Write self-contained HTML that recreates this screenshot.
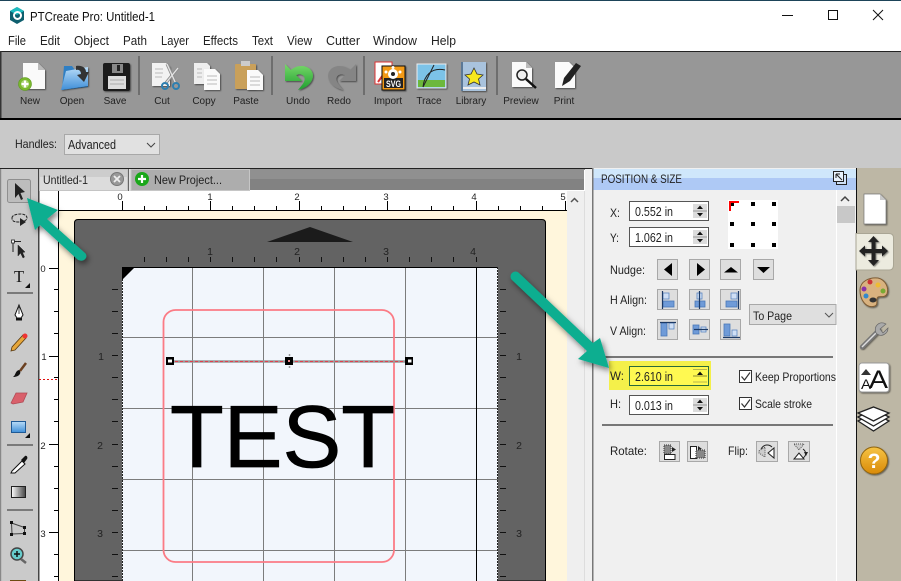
<!DOCTYPE html>
<html><head><meta charset="utf-8"><title>PTCreate Pro</title>
<style>
html,body{margin:0;padding:0;background:#fff;overflow:hidden}
svg{display:block}
text{font-family:"Liberation Sans",sans-serif;fill:#222}
</style></head><body>
<svg width="901" height="581" viewBox="0 0 901 581" xmlns="http://www.w3.org/2000/svg">
<defs>
<linearGradient id="blu" x1="0" y1="0" x2="0" y2="1"><stop offset="0" stop-color="#b9dcf7"/><stop offset="1" stop-color="#3f8fd8"/></linearGradient>
<linearGradient id="grn" x1="0" y1="0" x2="0" y2="1"><stop offset="0" stop-color="#78d86a"/><stop offset="1" stop-color="#1f9f2f"/></linearGradient>
<linearGradient id="gry" x1="0" y1="0" x2="1" y2="0"><stop offset="0" stop-color="#fff"/><stop offset="1" stop-color="#444"/></linearGradient>
<linearGradient id="org" x1="0" y1="0" x2="0" y2="1"><stop offset="0" stop-color="#f6c445"/><stop offset="1" stop-color="#d98a08"/></linearGradient>
<filter id="sh" x="-30%" y="-30%" width="160%" height="160%"><feDropShadow dx="2" dy="3" stdDeviation="3" flood-color="#000" flood-opacity=".5"/></filter>
<filter id="s2" x="-20%" y="-20%" width="140%" height="140%"><feDropShadow dx="1" dy="1" stdDeviation=".7" flood-color="#000" flood-opacity=".5"/></filter>
</defs>

<!-- title bar -->
<rect width="901" height="51" fill="#fff"/>
<rect width="901" height="1" fill="#1d4459"/>
<polygon points="17,7 24,11 24,20 17,24 10,20 10,11" fill="#0e5f6e"/>
<polygon points="17,7 24,11 17,15 10,11" fill="#1dbcc0"/>
<circle cx="17.500" cy="15.500" r="3.500" fill="none" stroke="#fff" stroke-width="2"/>
<text x="30" y="21" font-size="13" textLength="125" lengthAdjust="spacingAndGlyphs" style="fill:#111">PTCreate Pro: Untitled-1</text>
<g font-size="12.500" style="fill:#111">
<text x="8" y="45" textLength="18" lengthAdjust="spacingAndGlyphs">File</text>
<text x="40" y="45" textLength="20" lengthAdjust="spacingAndGlyphs">Edit</text>
<text x="74" y="45" textLength="35" lengthAdjust="spacingAndGlyphs">Object</text>
<text x="123" y="45" textLength="24" lengthAdjust="spacingAndGlyphs">Path</text>
<text x="161" y="45" textLength="28" lengthAdjust="spacingAndGlyphs">Layer</text>
<text x="203" y="45" textLength="35" lengthAdjust="spacingAndGlyphs">Effects</text>
<text x="252" y="45" textLength="21" lengthAdjust="spacingAndGlyphs">Text</text>
<text x="287" y="45" textLength="25" lengthAdjust="spacingAndGlyphs">View</text>
<text x="326" y="45" textLength="34" lengthAdjust="spacingAndGlyphs">Cutter</text>
<text x="373" y="45" textLength="44" lengthAdjust="spacingAndGlyphs">Window</text>
<text x="431" y="45" textLength="25" lengthAdjust="spacingAndGlyphs">Help</text>
</g>
<path d="M782 15.500H793M828.500 10.500H837.500V19.500H828.500ZM873 10L883 20M883 10L873 20" fill="none" stroke="#111" stroke-width="1"/>

<!-- toolbar -->
<rect y="51" width="901" height="68" fill="#979797"/>
<rect y="51" width="901" height="1" fill="#222"/>
<rect x="0" y="51" width="1.500" height="68" fill="#333"/>
<rect y="118" width="901" height="2" fill="#000"/>
<g fill="#6e6e6e"><rect x="138" y="56" width="2" height="39"/><rect x="271" y="56" width="2" height="39"/><rect x="363" y="56" width="2" height="39"/><rect x="496" y="56" width="2" height="39"/></g>

<!-- New -->
<path d="M23 63H38L45 70V89H23Z" fill="#fafafa" filter="url(#s2)"/><path d="M38 63V70H45Z" fill="#bbb"/>
<circle cx="25" cy="84" r="6.500" fill="#7ab82e" stroke="#5d9a1e" stroke-width=".6"/><circle cx="25" cy="84" r="4" fill="#eaf6d6" opacity=".45"/><path d="M25 80.500V87.500M21.500 84H28.500" stroke="#fff" stroke-width="2.200"/>
<!-- Open -->
<path d="M64 66H72L75 70H87L88 87L62 90Z" fill="#2f7fc4"/><path d="M61 90L66 71L88 67V86Z" fill="url(#blu)" filter="url(#s2)"/>
<path d="M76 66C82 65 86 68 86 72L89 72L84 82L77 75L81 74C81 71 79 69 76 70Z" fill="#333"/>
<!-- Save -->
<rect x="103" y="63" width="27" height="28" rx="2" fill="#1b1b1b" filter="url(#s2)"/><rect x="112" y="64" width="11" height="9" fill="#888"/><rect x="117" y="65" width="3" height="6" fill="#222"/><rect x="108" y="76" width="18" height="13" fill="#ddd"/><path d="M110 80H124M110 84H124" stroke="#aaa"/>
<!-- Cut -->
<path d="M152 63H166L170 67V86H152Z" fill="#f2f2f2" filter="url(#s2)"/><path d="M155 69H163M155 73H163M155 77H162" stroke="#bbb"/>
<path d="M167 64L176 84M178 68L165 84" stroke="#8f8f8f" stroke-width="3"/><path d="M167 64L176 84M178 68L165 84" stroke="#e4e4e4" stroke-width="1.300"/><circle cx="165" cy="86" r="3" fill="none" stroke="#2d7fb0" stroke-width="2"/><circle cx="176" cy="86" r="3" fill="none" stroke="#2d7fb0" stroke-width="2"/>
<!-- Copy -->
<path d="M194 63H207L210 66V84H194Z" fill="#eee" filter="url(#s2)"/><path d="M204 69H215L220 74V90H204Z" fill="#fafafa" filter="url(#s2)"/><path d="M207 76H217M207 80H217M207 84H217M197 69H202M197 73H202M197 77H202" stroke="#bbb"/>
<!-- Paste -->
<rect x="235" y="64" width="21" height="25" rx="1" fill="#c9a05a" filter="url(#s2)"/><rect x="241" y="61" width="9" height="5" fill="#ccc"/><path d="M247 70H258L263 75V90H247Z" fill="#fafafa" filter="url(#s2)"/><path d="M250 77H260M250 81H260M250 85H260" stroke="#bbb"/>
<!-- Undo -->
<path d="M285 64L285 81H302L296 75C303 72 308 78 302 85L298 90C311 87 317 76 310 69C304 64 295 66 291 70Z" fill="url(#grn)" filter="url(#s2)"/>
<!-- Redo -->
<path d="M356 64L356 81H339L345 75C338 72 333 78 339 85L343 90C330 87 324 76 331 69C337 64 346 66 350 70Z" fill="#858585" filter="url(#s2)"/>
<!-- Import -->
<path d="M375 62H392V84H375Z" fill="#fff" stroke="#d33" stroke-width="1"/><path d="M378 82L388 68" stroke="#d33" stroke-width="2"/>
<rect x="382" y="66" width="23" height="24" fill="#f39a12" stroke="#111" filter="url(#s2)"/><rect x="384" y="78" width="19" height="10" fill="#222"/>
<circle cx="393" cy="74" r="5" fill="#fff"/><circle cx="386" cy="72" r="1.500" fill="#fff"/><circle cx="400" cy="72" r="1.500" fill="#fff"/><circle cx="393" cy="67.500" r="1.500" fill="#fff"/><circle cx="393" cy="74" r="2" fill="#222"/>
<text x="386" y="87" font-size="9" font-weight="bold" textLength="15" lengthAdjust="spacingAndGlyphs" style="fill:#fff">SVG</text>
<!-- Trace -->
<rect x="417" y="64" width="29" height="24" fill="#7cc3e8" stroke="#eee" filter="url(#s2)"/><rect x="418" y="80" width="27" height="7" fill="#6cb83c"/><path d="M423 87C424 76 431 67 445 70M434 65L423 87" fill="none" stroke="#222" stroke-width="1"/>
<!-- Library -->
<rect x="461" y="62" width="25" height="29" fill="#a9c3dd" filter="url(#s2)"/><rect x="461" y="62" width="2" height="29" fill="#5b7896"/><rect x="463" y="87" width="23" height="2" fill="#eee"/>
<polygon points="474,68 477,74 483,75 478.500,79 480,85 474,82 468,85 469.500,79 465,75 471,74" fill="#f7e81e" stroke="#333" stroke-width=".8"/>
<!-- Preview -->
<path d="M512 62H526L532 68V87H512Z" fill="#fafafa" filter="url(#s2)"/><path d="M526 62V68H532Z" fill="#bbb"/><circle cx="522" cy="75" r="5" fill="#eee" stroke="#222" stroke-width="1.500"/><path d="M526 79L536 88" stroke="#111" stroke-width="2.500"/>
<!-- Print -->
<path d="M555 62H569L575 68V88H555Z" fill="#fafafa" filter="url(#s2)"/><path d="M562 86L564 78L576 63L581 66L570 81Z" fill="#222"/>
<g font-size="10" text-anchor="middle" style="fill:#1a1a1a">
<text x="30" y="104">New</text><text x="72" y="104">Open</text><text x="115" y="104">Save</text><text x="162" y="104">Cut</text><text x="204" y="104">Copy</text><text x="246" y="104">Paste</text><text x="298" y="104">Undo</text><text x="339" y="104">Redo</text><text x="388" y="104">Import</text><text x="429" y="104">Trace</text><text x="471" y="104">Library</text><text x="521" y="104">Preview</text><text x="564" y="104">Print</text>
</g>

<!-- options bar -->
<rect y="120" width="901" height="48" fill="#c9c9c9"/>
<text x="15" y="148" font-size="12" textLength="42" lengthAdjust="spacingAndGlyphs">Handles:</text>
<rect x="64.500" y="134.500" width="95" height="20" fill="#e1e1e1" stroke="#a8a8a8"/>
<text x="68" y="149" font-size="12.500" textLength="48" lengthAdjust="spacingAndGlyphs">Advanced</text>
<path d="M147 143L151 147L155 143" fill="none" stroke="#444"/>
<rect y="168" width="901" height="1.500" fill="#222"/>

<!-- left tools -->
<rect y="169" width="38" height="412" fill="#cacaca"/>
<rect x="0" y="169" width="1.200" height="412" fill="#888"/>
<rect x="38" y="169" width="1.500" height="412" fill="#444"/>
<rect x="7.500" y="179.500" width="23" height="23" rx="2" fill="#bdbdbd" stroke="#8f8f8f"/>
<path d="M15 183L15 198L18.500 194L21 200L23 199L20.500 193L25 192Z" fill="#222"/>
<path d="M12 218C12 215 17 214 21 214C25 214 27 216 27 218C27 221 22 222 18 222C14 222 12 221 12 218Z" fill="none" stroke="#222" stroke-width="1" stroke-dasharray="3 1"/><path d="M20 218L20 226L26 222Z" fill="#222"/>
<rect x="11.500" y="240" width="3" height="3" fill="#fff" stroke="#222" stroke-width=".8"/><path d="M14 241.500H21M13 243V252" stroke="#222"/><path d="M18 245V256L20.500 253L23 258L24.500 257L22.500 252.500L25 252Z" fill="#222" stroke="#222" stroke-width=".5"/>
<text x="14" y="282" font-size="16.500" style="font-family:'Liberation Serif',serif;fill:#111">T</text>
<polygon points="25,288 30,283 30,288" fill="#111"/>
<rect x="7" y="292" width="26" height="2" fill="#7a7a7a"/>
<path d="M19 305L23 315L21 318H17L15 315Z" fill="#fff" stroke="#111" stroke-width="1"/><path d="M19 307V314" stroke="#111" stroke-width=".8"/><rect x="16" y="318" width="6" height="2.500" fill="#111"/>
<path d="M12 347L11 351L15 350L26 338L23 335Z" fill="#e6a63a" stroke="#5a3a10" stroke-width=".8"/><circle cx="25" cy="336" r="2.500" fill="#e33"/>
<path d="M26 363L20 371" stroke="#6b4020" stroke-width="2.500"/><path d="M19 370C22 372 20 377 13 377C16 375 15 371 19 370Z" fill="#111"/>
<path d="M11 403L16 393H27L23 402L13 404Z" fill="#d9606b" stroke="#b04a55" stroke-width=".8"/>
<rect x="11.500" y="421.500" width="14" height="11" fill="url(#blu)" stroke="#1f5a96"/>
<polygon points="25,438 30,433 30,438" fill="#111"/>
<rect x="7" y="444" width="26" height="2" fill="#7a7a7a"/>
<path d="M12 471L22 461L25 464L15 473L11 473Z" fill="#fff" stroke="#111"/><path d="M21 460L25 456C27 455 28 458 27 459L24 463Z" fill="#111"/>
<rect x="11.500" y="486.500" width="14" height="11" fill="url(#gry)" stroke="#222"/>
<rect x="7" y="509" width="26" height="2" fill="#7a7a7a"/>
<path d="M11.500 523L24.500 527.500V533.500L12 534Z" fill="none" stroke="#444"/>
<g fill="#111"><rect x="10" y="521" width="3" height="3"/><rect x="23" y="526" width="3" height="3"/><rect x="23" y="532" width="3" height="3"/><rect x="10" y="533" width="3" height="3"/></g>
<circle cx="17" cy="554" r="6" fill="#6cc" stroke="#444" stroke-width="1.500"/><path d="M14 554H20M17 551V557" stroke="#111" stroke-width="1.500"/><path d="M21 559L26 563" stroke="#666" stroke-width="2.500"/>
<rect x="10" y="580" width="16" height="1" fill="#6e4b12"/>

<!-- tabs -->
<rect x="39" y="169" width="545" height="21" fill="#828282"/>
<rect x="39" y="169" width="545" height="10" fill="#909090"/>
<rect x="39.500" y="169.500" width="88" height="21" fill="#dcdcdc" stroke="#c4c4c4"/>
<rect x="40" y="170" width="87" height="7" fill="#cdcdcd"/>
<rect x="128" y="169" width="1" height="22" fill="#666"/>
<rect x="129" y="169" width="2" height="22" fill="#e2e2e2"/>
<rect x="131" y="169.500" width="118.500" height="21" fill="#adadad" stroke="#c6c6c6"/>
<text x="43" y="184" font-size="12" textLength="45" lengthAdjust="spacingAndGlyphs">Untitled-1</text>
<circle cx="117" cy="179" r="6.500" fill="#999" stroke="#777"/><path d="M114 176L120 182M120 176L114 182" stroke="#eee" stroke-width="1.800"/>
<circle cx="142" cy="179" r="7" fill="#1aa71a"/><path d="M142 175V183M138 179H146" stroke="#fff" stroke-width="2.200"/>
<text x="154" y="184" font-size="12" textLength="68" lengthAdjust="spacingAndGlyphs">New Project...</text>

<!-- rulers -->
<rect x="39.500" y="191" width="528" height="390" fill="#fff"/>
<rect x="59" y="211" width="508" height="370" fill="#fff6dc"/>
<rect x="567" y="191" width="17" height="390" fill="#efefef"/>
<rect x="584" y="191" width="1" height="390" fill="#ddd"/>
<rect x="585" y="169" width="7" height="412" fill="#f0f0f0"/>
<rect x="592" y="168" width="1.500" height="413" fill="#777"/>
<path d="M571 202L574.500 198.500L578 202" fill="none" stroke="#555" stroke-width="1.500"/>
<rect x="58" y="191" width="1" height="390" fill="#000"/>
<rect x="58" y="210" width="509" height="1" fill="#000"/>
<path d="M122.500 201V210M210.500 201V210M299.500 201V210M387.500 201V210M476.500 201V210M565.500 201V210M144.500 206V210M166.500 206V210M188.500 206V210M232.500 206V210M254.500 206V210M276.500 206V210M321.500 206V210M343.500 206V210M365.500 206V210M409.500 206V210M431.500 206V210M453.500 206V210M498.500 206V210M520.500 206V210M542.500 206V210" stroke="#000"/>
<path d="M49 268.500H58M49 356.500H58M49 444.500H58M49 532.500H58M54 289.500H58M54 311.500H58M54 333.500H58M54 377.500H58M54 399.500H58M54 421.500H58M54 466.500H58M54 488.500H58M54 510.500H58M54 554.500H58M54 576.500H58" stroke="#000"/>
<path d="M39 379.500H58" stroke="#e01010" stroke-dasharray="2 2"/>
<g font-size="9.500" text-anchor="middle" style="fill:#334">
<text x="120" y="200">0</text><text x="210" y="200">1</text><text x="297" y="200">2</text><text x="386" y="200">3</text><text x="474" y="200">4</text><text x="563" y="200">5</text>
<text x="43" y="272">0</text><text x="44" y="360">1</text><text x="43" y="449">2</text><text x="43" y="537">3</text>
</g>

<!-- mat -->
<path d="M74.500 581V223Q74.500 219.500 78 219.500H542Q545.500 219.500 545.500 223V581Z" fill="#636363" stroke="#000"/>
<polygon points="310,227 267,242 353,242" fill="#1b1b1b"/>
<path d="M144.500 257V262M166.500 257V262M188.500 257V262M210.500 257V262M232.500 257V262M254.500 257V262M276.500 257V262M299.500 257V262M321.500 257V262M343.500 257V262M365.500 257V262M387.500 257V262M409.500 257V262M431.500 257V262M453.500 257V262M476.500 257V262" stroke="#111"/>
<path d="M112 289.500H118M112 311.500H118M112 333.500H118M112 355.500H118M112 377.500H118M112 399.500H118M112 421.500H118M112 444.500H118M112 466.500H118M112 488.500H118M112 510.500H118M112 532.500H118M112 554.500H118M112 576.500H118M500 289.500H506M500 311.500H506M500 333.500H506M500 355.500H506M500 377.500H506M500 399.500H506M500 421.500H506M500 444.500H506M500 466.500H506M500 488.500H506M500 510.500H506M500 532.500H506M500 554.500H506M500 576.500H506" stroke="#111"/>
<g font-size="10.500" text-anchor="middle" style="fill:#111">
<text x="210" y="255">1</text><text x="297" y="255">2</text><text x="386" y="255">3</text><text x="473" y="255">4</text>
<text x="101" y="360">1</text><text x="100" y="449">2</text><text x="100" y="537">3</text>
<text x="519" y="360">1</text><text x="519" y="449">2</text><text x="519" y="537">3</text>
</g>

<!-- paper -->
<rect x="122" y="267" width="376" height="314" fill="#f2f6fc"/>
<path d="M192.500 267V581M263.500 267V581M334.500 267V581M405.500 267V581M122 337.500H498M122 408.500H498M122 479.500H498M122 550.500H498" stroke="#7c7c7c"/>
<path d="M476.500 267V581M122 267.500H498" stroke="#000"/>
<path d="M122.500 267V581M497.500 267V581" stroke="#222" stroke-dasharray="2 1"/>
<polygon points="122,267 135,267 122,280" fill="#000"/>
<rect x="163.500" y="310" width="230.500" height="252" rx="12" fill="none" stroke="#fb7b85" stroke-width="1.800"/>
<text x="170" y="467" font-size="88" textLength="225" lengthAdjust="spacingAndGlyphs" style="fill:#000;stroke:#000;stroke-width:.8">TEST</text>
<path d="M170 361.500H409" stroke="#999" stroke-width="2.500"/>
<path d="M170 361.500H409" stroke="#e0404c" stroke-width="1" stroke-dasharray="3 2"/>
<path d="M289.500 354V368" stroke="#999" stroke-width="1.500" stroke-dasharray="2 1"/>
<g fill="#000"><rect x="166" y="357" width="8" height="8"/><rect x="285" y="357" width="8" height="8"/><rect x="405" y="357" width="8" height="8"/></g>
<g fill="#fff"><rect x="168" y="359.500" width="4" height="3"/><rect x="408" y="359.500" width="3.500" height="3"/></g>
<rect x="288" y="360" width="2" height="2" fill="#e88"/>

<!-- panel -->
<rect x="593.500" y="168" width="263" height="413" fill="#f0f0f0"/>
<rect x="593.500" y="169" width="263" height="9" fill="#cfe7fb"/>
<rect x="593.500" y="178" width="263" height="12" fill="#aec9f5"/>
<text x="601" y="183" font-size="11.500" textLength="81" lengthAdjust="spacingAndGlyphs">POSITION &amp; SIZE</text>
<path d="M836.500 174.500H846.500V184.500H836.500Z" fill="#cfe0f5" stroke="#222"/><path d="M833.500 171.500H843.500V181.500H833.500Z" fill="#e8f2fc" stroke="#222"/><path d="M836 174L842 180M836 174H840M836 174V178" stroke="#222" fill="none"/>
<rect x="836" y="190" width="1" height="391" fill="#fff"/>
<path d="M841 201L845 197L849 201" fill="none" stroke="#444" stroke-width="1.500"/>
<rect x="837" y="206" width="18" height="17" fill="#c8c8c8"/>

<g font-size="12">
<text x="610" y="217" textLength="10" lengthAdjust="spacingAndGlyphs">X:</text>
<text x="610" y="242" textLength="9" lengthAdjust="spacingAndGlyphs">Y:</text>
<text x="610" y="274" textLength="35" lengthAdjust="spacingAndGlyphs">Nudge:</text>
<text x="610" y="304" textLength="37" lengthAdjust="spacingAndGlyphs">H Align:</text>
<text x="610" y="335" textLength="36" lengthAdjust="spacingAndGlyphs">V Align:</text>
<text x="610" y="408" textLength="11" lengthAdjust="spacingAndGlyphs">H:</text>
<text x="610" y="455" textLength="37" lengthAdjust="spacingAndGlyphs">Rotate:</text>
<text x="728" y="455" textLength="20" lengthAdjust="spacingAndGlyphs">Flip:</text>
</g>
<!-- fields -->
<g fill="#fff" stroke="#555"><rect x="629.500" y="201.500" width="79" height="19"/><rect x="629.500" y="227.500" width="79" height="19"/><rect x="629.500" y="395.500" width="79" height="19"/></g>
<g font-size="12.500">
<text x="635" y="216" textLength="38" lengthAdjust="spacingAndGlyphs">0.552 in</text>
<text x="635" y="242" textLength="38" lengthAdjust="spacingAndGlyphs">1.062 in</text>
<text x="635" y="410" textLength="38" lengthAdjust="spacingAndGlyphs">0.013 in</text>
</g>
<g fill="#dcdcdc"><rect x="693" y="204" width="14" height="14"/><rect x="693" y="230" width="14" height="14"/><rect x="693" y="398" width="14" height="14"/></g>
<path d="M697 209L700 205.500L703 209ZM697 213H703L700 216.500ZM697 235L700 231.500L703 235ZM697 239H703L700 242.500ZM697 403L700 399.500L703 403ZM697 407H703L700 410.500Z" fill="#111"/>
<path d="M693 211H707M693 237H707M693 405H707" stroke="#999"/>
<!-- grid -->
<rect x="728" y="200" width="50" height="49" fill="#fff"/>
<g fill="#000"><rect x="730" y="202" width="4" height="4"/><rect x="751" y="202" width="4" height="4"/><rect x="772" y="202" width="4" height="4"/><rect x="730" y="222" width="4" height="4"/><rect x="751" y="222" width="4" height="4"/><rect x="772" y="222" width="4" height="4"/><rect x="730" y="243" width="4" height="4"/><rect x="751" y="243" width="4" height="4"/><rect x="772" y="243" width="4" height="4"/></g>
<path d="M730 211V202H739" fill="none" stroke="#f00" stroke-width="2"/>
<!-- buttons -->
<g fill="#dedede" stroke="#a8a8a8">
<rect x="657.500" y="259.500" width="20" height="20"/><rect x="689.500" y="259.500" width="20" height="20"/><rect x="720.500" y="259.500" width="20" height="20"/><rect x="753.500" y="259.500" width="20" height="20"/>
<rect x="657.500" y="289.500" width="20" height="20"/><rect x="689.500" y="289.500" width="20" height="20"/><rect x="720.500" y="289.500" width="20" height="20"/>
<rect x="657.500" y="319.500" width="20" height="20"/><rect x="689.500" y="319.500" width="20" height="20"/><rect x="720.500" y="319.500" width="20" height="20"/>
<rect x="659.500" y="441.500" width="20" height="20"/><rect x="687.500" y="441.500" width="20" height="20"/><rect x="756.500" y="441.500" width="21" height="20"/><rect x="788.500" y="441.500" width="21" height="20"/>
</g>
<path d="M672 263V276L664 269.500ZM697 263V276L705 269.500ZM724 272.500H738L731 267ZM757 267H770L763.500 273Z" fill="#000"/>
<!-- align icons -->
<g fill="#6f9bd8" stroke="#4a78b8" stroke-width=".8">
<rect x="663" y="301" width="11" height="6"/><rect x="695" y="301" width="10" height="6"/><rect x="726" y="301" width="11" height="6"/>
<rect x="661" y="323" width="6" height="13"/><rect x="693" y="325" width="6" height="9"/><rect x="724" y="324" width="6" height="12"/>
</g>
<g fill="#cfdff5" stroke="#5c86c0" stroke-width=".8">
<rect x="663" y="293" width="6" height="6"/><rect x="697" y="293" width="5" height="6"/><rect x="731" y="293" width="6" height="6"/>
<rect x="669" y="323" width="5" height="6"/><rect x="701" y="327" width="5" height="5"/><rect x="732" y="330" width="5" height="6"/>
</g>
<path d="M662.500 291V309M699.500 291V309M738.500 291V309M660 322.500H676M694 329.500H708M723 337.500H740" stroke="#1c3a66" stroke-width="1.200"/>
<!-- To Page -->
<rect x="749.500" y="304.500" width="86.500" height="20" fill="#dfdfdf" stroke="#a8a8a8"/>
<text x="753" y="320" font-size="12" textLength="39" lengthAdjust="spacingAndGlyphs">To Page</text>
<path d="M825 313L829 317L833 313" fill="none" stroke="#555"/>
<rect x="602" y="356" width="231" height="2" fill="#777"/>
<rect x="602" y="424" width="231" height="2" fill="#777"/>
<!-- W highlight -->
<rect x="609" y="361" width="102" height="29" fill="#f4f04a"/>
<rect x="629.500" y="366.500" width="79" height="19" fill="#fff951" stroke="#2a6a3a"/>
<text x="635" y="381" font-size="12.500" textLength="38" lengthAdjust="spacingAndGlyphs">2.610 in</text>
<path d="M693 369.500H707M693 382H707" stroke="#b9b64a"/><path d="M697 375L700 371.500L703 375Z" fill="#111"/><path d="M693 376H707" stroke="#8d8a30"/>
<text x="610" y="380" font-size="12" textLength="14" lengthAdjust="spacingAndGlyphs">W:</text>
<!-- checks -->
<rect x="739.500" y="370.500" width="12" height="12" fill="#fff" stroke="#333"/><rect x="739.500" y="397.500" width="12" height="12" fill="#fff" stroke="#333"/>
<path d="M741.500 376.500L744.500 380L750 372.500M741.500 403.500L744.500 407L750 399.500" fill="none" stroke="#333" stroke-width="1.200"/>
<text x="755" y="381" font-size="12" textLength="81" lengthAdjust="spacingAndGlyphs">Keep Proportions</text>
<text x="755" y="408" font-size="12" textLength="57" lengthAdjust="spacingAndGlyphs">Scale stroke</text>
<!-- rotate flip icons -->
<path d="M664 445H671V454H664Z" fill="#888" stroke="#333" stroke-dasharray="1 1"/><path d="M664.500 454.500H675V459.500H664.500Z" fill="#fff" stroke="#222"/><path d="M672 447L676 449.500L672 452Z" fill="#222"/>
<path d="M690.500 446.500H696.500V458.500H690.500Z" fill="#fff" stroke="#222"/><path d="M696 450H705V458H696Z" fill="#888" stroke="#333" stroke-dasharray="1 1"/><path d="M698 446L702 449L698 450Z" fill="#222"/>
<path d="M759 451L765 447V457L759 453Z" fill="#ccc" stroke="#555" stroke-dasharray="1 1"/><path d="M774 448V458L768 453Z" fill="#fff" stroke="#222"/><path d="M761 449C764 444 769 444 772 447" fill="none" stroke="#222"/>
<path d="M794 444H804L799 450Z" fill="#ccc" stroke="#555" stroke-dasharray="1 1"/><path d="M794 459H804L799 453Z" fill="#fff" stroke="#222"/><path d="M803 449C807 452 806 456 803 458" fill="none" stroke="#222"/><path d="M804 452H808L806 456Z" fill="#222"/>

<!-- right sidebar -->
<rect x="856" y="168" width="45" height="413" fill="#bdb7a5"/>
<rect x="856" y="168" width="1" height="413" fill="#111"/>
<path d="M864 194H880L886 200V224H864Z" fill="#fff" stroke="#777" stroke-width=".7" filter="url(#s2)"/><path d="M880 194V200H886Z" fill="#c9c9c9"/>
<path d="M856 233.500H889Q893.500 233.500 893.500 238V265Q893.500 270 889 270H856Z" fill="#ecebdf" stroke="#a9a594"/>
<path d="M873.500 236L879 242H875.500V249H882V245.500L888 251L882 256.500V253H875.500V260H879L873.500 266L868 260H871.500V253H865V256.500L859 251L865 245.500V249H871.500V242H868Z" fill="#222" filter="url(#s2)"/>
<path d="M860 290C860 281 870 277 878 278C886 280 889 288 887 294C885 298 880 296 878 297C875 299 879 304 875 306C866 309 860 300 860 290Z" fill="#d9b27f" stroke="#7d5c34" filter="url(#s2)"/>
<circle cx="870" cy="282" r="2.500" fill="#c33"/><circle cx="878" cy="285" r="2.500" fill="#eb3"/><circle cx="883" cy="291" r="2.500" fill="#7a3"/><circle cx="864" cy="289" r="2.500" fill="#83a"/><circle cx="866" cy="296" r="2.500" fill="#38c"/><ellipse cx="873" cy="300" rx="3.500" ry="2.500" fill="#333"/>
<path d="M862 347L879 330" stroke="#777" stroke-width="4.500" stroke-linecap="round" filter="url(#s2)"/><path d="M862 347L879 330" stroke="#ddd" stroke-width="1.500"/><path d="M886 324L880 329L883 333L888 328C888 334 881 338 876 333C873 327 879 320 886 324Z" fill="#aaa" stroke="#666" stroke-width=".7"/>
<rect x="859" y="363" width="30" height="29" rx="3" fill="#fff" stroke="#999" filter="url(#s2)"/>
<polygon points="866,369 871,375 861,375" fill="#333"/>
<text x="861" y="389" font-size="14" textLength="10" lengthAdjust="spacingAndGlyphs" style="fill:#111">A</text>
<text x="869" y="388" font-size="25" textLength="19" lengthAdjust="spacingAndGlyphs" style="fill:#111">A</text>
<g fill="#fff" stroke="#222" stroke-width="1.300"><path d="M858 421L873.500 413L889 421L873.500 431Z"/><path d="M858 417L873.500 409L889 417L873.500 426Z"/><path d="M858 413L873.500 407L889 413L873.500 421Z"/></g>
<circle cx="874" cy="460.500" r="13.500" fill="url(#org)" stroke="#8f6410" filter="url(#s2)"/>
<text x="874" y="468" font-size="21" font-weight="bold" text-anchor="middle" style="fill:#fff">?</text>

<!-- arrows -->
<g filter="url(#sh)" fill="#0aae90">
<path d="M27 198L58 210L47 219L85 253C87 255 87 258 84 260C82 261 79 261 77 259L40 225L35 230Z"/>
<path d="M609 368L578 359L587 351L512 280C510 278 510 275 512 273C514 271 517 271 519 273L593 343L600 338Z"/>
</g>
</svg>
</body></html>
